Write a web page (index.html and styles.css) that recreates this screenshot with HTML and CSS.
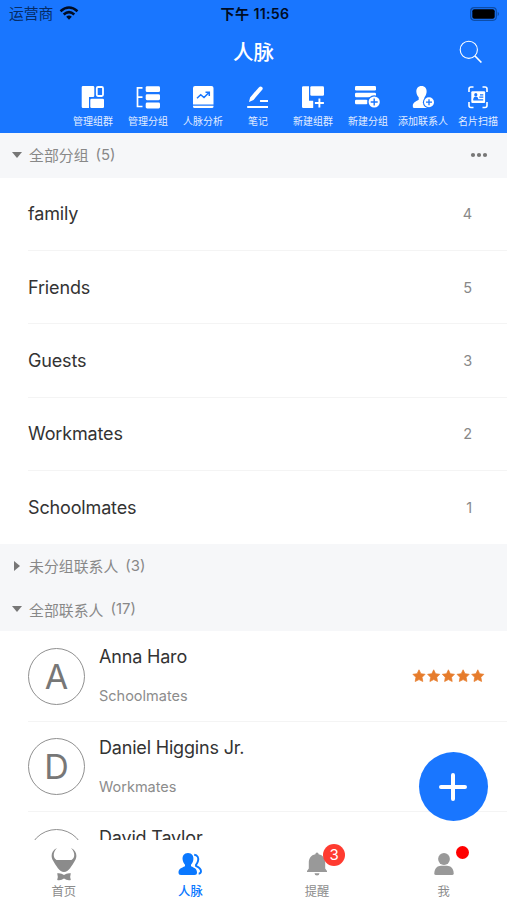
FILE: index.html
```html
<!DOCTYPE html>
<html lang="zh-CN">
<head>
<meta charset="utf-8">
<title>人脉</title>
<link rel="stylesheet" href="styles.css">
</head>
<body>
<div class="app">
  <header class="header">
    <div class="status">
      <div class="carrier">运营商
        <svg width="20" height="14" viewBox="0 0 20 14" fill="none" stroke="#000c24" stroke-width="2.5"><path d="M1.5 5.2Q10-2.3 18.5 5.2M4.7 8.5Q10 3.8 15.3 8.5"/><path d="M7.2 10.8Q10 8.2 12.8 10.8L10 13.7Z" fill="#000c24" stroke="none"/></svg>
      </div>
      <div class="time">下午 11:56</div>
      <svg class="battery" width="30" height="14" viewBox="0 0 30 14"><rect x=".7" y=".7" width="25.6" height="12.6" rx="3.5" fill="none" stroke="#0d4da8" stroke-width="1.2"/><rect x="2.3" y="2.3" width="22.4" height="9.4" rx="2" fill="#000"/><path d="M27.7 4.8q2.6 2.2 0 4.4z" fill="#0d4da8"/></svg>
    </div>
    <div class="titlebar">
      <h1>人脉</h1>
      <svg class="search" width="24" height="24" viewBox="0 0 24 24" fill="none" stroke="#fff"><circle cx="9.8" cy="9.8" r="8.6" stroke-width="1.1"/><path d="M16 16l6.4 6.5" stroke-width="1.7"/></svg>
    </div>
    <nav class="tools">
      <div class="tool"><svg viewBox="0 0 24 24"><path d="M2 1H12Q13.3 1 13.3 2.3V10.7Q13.3 12 12 12H8V23H2Q.7 23 .7 21.7V2.3Q.7 1 2 1Z"/><rect x="9.3" y="13.8" width="13.7" height="9.2" rx="1.3"/><rect x="15.8" y="2" width="6.2" height="9" rx="1.2" fill="none" stroke="#fff" stroke-width="1.8"/></svg><span>管理组群</span></div>
      <div class="tool"><svg viewBox="0 0 24 24"><path d="M6.500 2.800H1.500V21.500H6.500M1.500 12.200H6.500" fill="none" stroke="#fff" stroke-width="1.700"/><rect x="9.7" y="1.2" width="14.3" height="5.9" rx="1.4"/><rect x="9.7" y="9.300" width="14.3" height="5.900" rx="1.4"/><rect x="9.7" y="17.500" width="14.3" height="5.900" rx="1.4"/></svg><span>管理分组</span></div>
      <div class="tool"><svg viewBox="0 0 24 24"><path d="M4 1H20.5Q22.5 1 22.5 3V19.5H2V3Q2 1 4 1ZM2 20.7H22.5V21.5Q22.5 23 21 23H3.5Q2 23 2 21.5Z"/><path d="M6 13.2L9.7 9.8L13 12.6L18 7.5M14.5 7.2H18.3V11" fill="none" stroke="#1976ff" stroke-width="1.5"/></svg><span>人脉分析</span></div>
      <div class="tool"><svg viewBox="0 0 24 24"><path d="M12.8 2.4Q14.5.6 16 2Q17.5 3.3 16 5.1L7.5 14.9L3 17L4.1 12.4ZM1.8 21H22V23H1.8Q1 23 1 22Q1 21 1.8 21ZM14.3 15H22V17H14.3Q13.5 16 14.3 15Z"/></svg><span>笔记</span></div>
      <div class="tool"><svg viewBox="0 0 24 24"><path d="M2.3 1.2H8V15.8H12.2V23H2.3Q1 23 1 21.7V2.5Q1 1.2 2.3 1.2Z"/><rect x="9.3" y="1.2" width="13.7" height="9.6" rx="1.3"/><path d="M18.4 13.5V22.5M13.9 18H22.9" fill="none" stroke="#fff" stroke-width="1.9"/></svg><span>新建组群</span></div>
      <div class="tool"><svg viewBox="0 0 26 24"><rect x="0" y="1" width="21" height="4.5" rx="1.3"/><rect x="0" y="7.8" width="21" height="4.5" rx="1.3"/><rect x="0" y="14.7" width="12.5" height="4.5" rx="1.3"/><circle cx="19.2" cy="17" r="6.8" fill="#1976ff"/><circle cx="19.2" cy="17" r="5.6"/><path d="M19.2 13.5V20.5M15.7 17H22.7" stroke="#1976ff" stroke-width="1.4"/></svg><span>新建分组</span></div>
      <div class="tool"><svg viewBox="0 0 24 24"><path d="M10.5 1C14 1 16 3.6 15.6 7.3C15.3 9.7 14.5 11 13.5 12.2V14L18 17V23H3Q1.5 23 1.8 20.5C2 17.5 4.3 16.7 7.7 14.7V12.2C6.4 11 5.6 9.5 5.4 7.3C5 3.6 7 1 10.5 1Z"/><circle cx="18" cy="17.2" r="6.1" fill="#1976ff"/><circle cx="18" cy="17.2" r="5"/><path d="M18 14.2V20.2M15 17.2H21" stroke="#1976ff" stroke-width="1.3"/></svg><span>添加联系人</span></div>
      <div class="tool"><svg viewBox="0 0 24 24"><path d="M3 7V4Q3 2 5 2H7.5M16.5 2H19Q21 2 21 4V7M21 17V20.5Q21 22.5 19 22.5H16.5M7.5 22.5H5Q3 22.5 3 20.5V17" fill="none" stroke="#fff" stroke-width="1.6"/><rect x="5.3" y="6.3" width="13.8" height="11.8" rx="1"/><path d="M14 9.8H17.3M13.3 12.2H17.3M7.3 14.8H17.2" stroke="#1976ff" stroke-width="1.2"/><circle cx="9.8" cy="9.7" r="1.6" fill="#1976ff"/><path d="M7.2 14.8Q7.5 11.5 9.8 11.5T12.3 14.8Z" fill="#1976ff"/></svg><span>名片扫描</span></div>
    </nav>
  </header>
  <main class="content">
    <div class="section first"><i class="arrow down"></i><span>全部分组</span><b>(5)</b><svg class="more" width="18" height="6" viewBox="0 0 18 6" fill="#777"><circle cx="3" cy="3" r="2.1"/><circle cx="9" cy="3" r="2.1"/><circle cx="15" cy="3" r="2.1"/></svg></div>
    <ul class="groups">
      <li><span>family</span><em>4</em></li>
      <li><span>Friends</span><em>5</em></li>
      <li><span>Guests</span><em>3</em></li>
      <li><span>Workmates</span><em>2</em></li>
      <li><span>Schoolmates</span><em>1</em></li>
    </ul>
    <div class="section"><i class="arrow right"></i><span>未分组联系人</span><b>(3)</b></div>
    <div class="section"><i class="arrow down"></i><span>全部联系人</span><b>(17)</b></div>
    <div class="contacts">
      <div class="contact"><div class="avatar">A</div><div class="info"><div class="name">Anna Haro</div><div class="group">Schoolmates</div></div>
        <svg class="stars" width="73" height="14" viewBox="0 0 73 14" fill="#e67c2c" stroke="#e67c2c" stroke-width=".7" stroke-linejoin="round"><defs><path id="star" d="M7 .8L8.9 4.7L13.1 5.3L10.1 8.3L10.8 12.5L7 10.6L3.2 12.5L3.9 8.3L.9 5.3L5.1 4.7Z"/></defs><use href="#star"/><use href="#star" x="14.7"/><use href="#star" x="29.4"/><use href="#star" x="44.1"/><use href="#star" x="58.8"/></svg>
      </div>
      <div class="contact"><div class="avatar">D</div><div class="info"><div class="name">Daniel Higgins Jr.</div><div class="group">Workmates</div></div></div>
      <div class="contact"><div class="avatar"></div><div class="info"><div class="name">David Taylor</div></div></div>
    </div>
  </main>
  <button class="fab" aria-label="添加"><svg width="30" height="30" viewBox="0 0 30 30" stroke="#fff" stroke-width="4" stroke-linecap="round"><path d="M15 3V27M3 15H27"/></svg></button>
  <nav class="tabs">
    <div class="tab"><svg width="26" height="34" viewBox="0 0 26 34" fill="#8b8b8b"><path d="M6 1C0 3.800-.4 9.500 2 13.500C5 18.500 8.500 25 13 25S21 18.500 24 13.500C26.400 9.500 26 3.800 20 1C24.500 5.500 24 11.300 20.500 12.900H5.500C2 11.300 1.500 5.500 6 1Z"/><path d="M6.200 26.300Q10 25.600 13 28Q16 25.600 19.800 26.300Q18.700 29.500 19.800 33Q16 33.800 13 31.500Q10 33.800 6.200 33Q7.300 29.500 6.200 26.300Z"/></svg><span>首页</span></div>
    <div class="tab active"><svg width="26" height="24" viewBox="0 0 26 24" fill="#0a78ff"><path d="M11 1C15 1 17 4 16.300 8C15.900 10.200 15 11.500 14 12.800V14.300C17.500 16 20 16.800 20 20.500Q20 23 17.500 23H4Q1.500 23 1.500 20.500C1.500 16.800 4.500 16 8 14.300V12.800C7 11.500 6.100 10.200 5.700 8C5 4 7 1 11 1Z"/><path d="M17.200 2.700C20.800 3 21.800 6.100 21 9C20.600 10.700 19.800 11.800 19 12.800V14C22 15.500 24 16.400 24 19.300Q24 21.500 21.700 21.700" fill="none" stroke="#0a78ff" stroke-width="1.900"/></svg><span>人脉</span></div>
    <div class="tab"><svg width="24" height="24" viewBox="0 0 24 24" fill="#999"><path d="M12 .6Q13.600.6 13.600 2.200C18.200 3 20.200 6.500 20.200 10.500V16.500L22 19V20H2V19L3.800 16.500V10.500C3.800 6.500 5.800 3 10.400 2.200Q10.400.6 12 .6ZM9.500 21.200H14.500Q14.300 23.500 12 23.500T9.500 21.200Z"/></svg><span>提醒</span><div class="badge">3</div></div>
    <div class="tab"><svg width="22" height="24" viewBox="0 0 22 24" fill="#999"><circle cx="11" cy="7" r="5.900"/><path d="M1.300 21.500C1.300 16.500 4.500 13.800 8 13.800H14C17.500 13.800 20.700 16.500 20.700 21.500Q20.700 23 19 23H3Q1.300 23 1.300 21.500Z"/></svg><span>我</span><div class="dot"></div></div>
  </nav>
</div>
</body>
</html>
```
FILE: styles.css
```css
* { box-sizing: border-box; }
body { margin: 0; font-family: Inter, "Noto Sans CJK SC", sans-serif; color: #333; }
.app { position: relative; width: 507px; height: 900px; display: flex; flex-direction: column; overflow: hidden; background: #fff; }
.header { flex: none; height: 133px; background: #1976ff; color: #fff; }
.status { height: 28px; padding: 0 7px 0 9px; display: grid; grid-template-columns: 1fr auto 1fr; align-items: center; color: #000c24; font-size: 14.800px; line-height: 28px; }
.carrier { display: flex; align-items: center; gap: 6px; color: #052c66; }
.carrier svg { margin-top: -2px; }
.battery { margin-top: -1px; justify-self: end; }
.time { font-weight: 600; font-size: 14.200px; letter-spacing: .3px; padding-left: 1px; }
.titlebar { height: 48px; padding: 0 24px; display: grid; grid-template-columns: 1fr auto 1fr; align-items: center; }
h1 { grid-column: 2; margin: 1px 0 -1px; font-size: 20.500px; line-height: 48px; font-weight: 500; }
.search { justify-self: end; }
.tools { display: grid; grid-template-columns: repeat(8, 55px); padding: 9px 0 0 65.500px; }
.tool { display: flex; flex-direction: column; align-items: center; white-space: nowrap; font-size: 10px; line-height: 14px; color: #e2edff; }
.tool svg { display: block; height: 24px; margin-bottom: 5px; fill: #fff; }
.content { flex: 1; min-height: 0; overflow: hidden; }
.section { display: flex; align-items: center; height: 43.500px; padding: 0 19px 1px 12px; background: #f6f7f9; color: #888; font-size: 14.900px; }
.section.first { height: 44.500px; }
.section b { font-weight: 400; margin-left: 7px; }
.arrow { width: 10px; margin-right: 7px; display: flex; justify-content: center; }
.arrow::before { content: ""; border: 5px solid transparent; }
.arrow.down::before { border-top: 6px solid #777; border-bottom: 0; }
.arrow.right::before { border-left: 6px solid #777; border-right: 0; }
.more { margin-left: auto; }
.groups { margin: 0; padding: 0 0 0 28px; list-style: none; }
.groups li { display: flex; justify-content: space-between; align-items: center; height: 73.400px; padding-right: 35px; border-bottom: 1px solid #f4f4f4; font-size: 18px; letter-spacing: -.15px; }
.groups li:last-child { border-color: transparent; }
.groups em { font-style: normal; font-size: 14.500px; color: #888; }
.contacts { padding-left: 28px; }
.contact { display: flex; height: 90.500px; border-bottom: 1px solid #f4f4f4; padding: 16.500px 22px 0 0; }
.avatar { flex: none; width: 57px; height: 57px; border: 1.500px solid #909090; border-radius: 50%; display: flex; align-items: center; justify-content: center; font-size: 34px; color: #777; }
.info { margin-left: 14px; flex: 1; }
.name { font-size: 18px; line-height: 22px; margin-top: -1.500px; letter-spacing: -.18px; }
.group { margin-top: 19px; font-size: 14.500px; line-height: 18px; color: #8c8c8c; }
.stars { margin-top: 21.500px; }
.fab { position: absolute; left: 418.500px; top: 752px; width: 69px; height: 69px; border: 0; border-radius: 50%; background: #1976ff; display: flex; align-items: center; justify-content: center; padding: 0; }
.tabs { flex: none; height: 60px; padding-left: .5px; background: #fff; display: grid; grid-template-columns: repeat(4, 126.600px); }
.tab { position: relative; display: flex; flex-direction: column; align-items: center; justify-content: flex-end; padding-bottom: 0; font-size: 12.300px; line-height: 17px; color: #8c8c8c; }
.tab svg { display: block; margin-bottom: 7px; }
.tab:first-child svg { margin-bottom: 2px; }
.tab.active { color: #0a78ff; font-weight: 500; }
.badge { position: absolute; left: 69.500px; top: 4px; width: 22px; height: 22px; border-radius: 50%; background: #ff3b30; color: #fff; text-align: center; font-size: 15px; line-height: 22px; }
.dot { position: absolute; left: 76px; top: 6px; width: 13px; height: 13px; border-radius: 50%; background: #f00; }
```
